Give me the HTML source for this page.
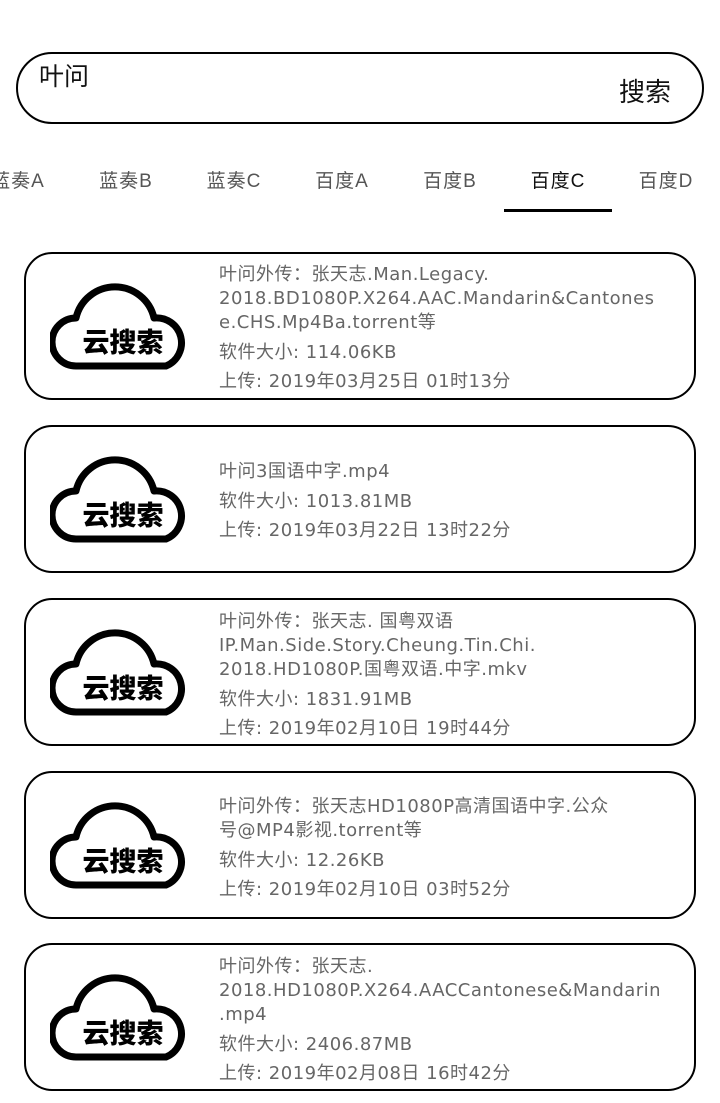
<!DOCTYPE html>
<html><head><meta charset="utf-8"><style>
*{margin:0;padding:0;box-sizing:border-box}
body{width:720px;height:1103px;background:#fff;position:relative;overflow:hidden;font-family:"Liberation Sans","Noto Sans CJK SC",sans-serif}
.search{position:absolute;left:16px;top:52px;width:688px;height:72px;border:2px solid #000;border-radius:36px}
.q{position:absolute;left:39px;top:57px;font-size:25px;color:#111}
.btn{position:absolute;left:619px;top:72px;font-size:26px;color:#111}
.tab{position:absolute;top:166px;font-size:19px;color:#555;width:108px;text-align:center;letter-spacing:1px}
.tab.on{color:#111}
.ul{position:absolute;left:504px;top:209px;width:108px;height:3px;background:#000}
.card{position:absolute;left:24px;width:672px;height:148px;border:2px solid #000;border-radius:28px}
.card svg{position:absolute;left:24px;top:26px}
.t{position:absolute;left:193px;font-size:18px;color:#666;white-space:nowrap;letter-spacing:0.5px;font-family:"DejaVu Sans","Noto Sans CJK SC",sans-serif}
.t .ti{line-height:24px}
.t .m{line-height:29px}
.t .ti+.m{margin-top:3px}
</style></head><body>
<div class="search"></div>
<div class="q">叶问</div>
<div class="btn">搜索</div>
<div class="tab" style="left:-36px">蓝奏A</div>
<div class="tab" style="left:72px">蓝奏B</div>
<div class="tab" style="left:180px">蓝奏C</div>
<div class="tab" style="left:288px">百度A</div>
<div class="tab" style="left:396px">百度B</div>
<div class="tab on" style="left:504px">百度C</div>
<div class="tab" style="left:612px">百度D</div>
<div class="ul"></div>

<div class="card" style="top:252px">
<svg width="144" height="94" viewBox="0 0 144 94"><path d="M26,86 A24,24 0 0 1 26,38 A40,40 0 0 1 104,38 A25,25 0 0 1 116,86 Z" fill="#fff" stroke="#000" stroke-width="7" stroke-linejoin="round"/><text x="73" y="72" text-anchor="middle" font-size="27" font-weight="900" font-family="Noto Sans CJK SC,sans-serif" fill="#000">云搜索</text></svg>
<div class="t" style="top:9px"><div class="ti">叶问外传：张天志.Man.Legacy.<br>2018.BD1080P.X264.AAC.Mandarin&amp;Cantones<br>e.CHS.Mp4Ba.torrent等</div><div class="m">软件大小: 114.06KB</div><div class="m">上传: 2019年03月25日 01时13分</div></div>
</div>

<div class="card" style="top:425px">
<svg width="144" height="94" viewBox="0 0 144 94"><path d="M26,86 A24,24 0 0 1 26,38 A40,40 0 0 1 104,38 A25,25 0 0 1 116,86 Z" fill="#fff" stroke="#000" stroke-width="7" stroke-linejoin="round"/><text x="73" y="72" text-anchor="middle" font-size="27" font-weight="900" font-family="Noto Sans CJK SC,sans-serif" fill="#000">云搜索</text></svg>
<div class="t" style="top:33px"><div class="ti">叶问3国语中字.mp4</div><div class="m">软件大小: 1013.81MB</div><div class="m">上传: 2019年03月22日 13时22分</div></div>
</div>

<div class="card" style="top:598px">
<svg width="144" height="94" viewBox="0 0 144 94"><path d="M26,86 A24,24 0 0 1 26,38 A40,40 0 0 1 104,38 A25,25 0 0 1 116,86 Z" fill="#fff" stroke="#000" stroke-width="7" stroke-linejoin="round"/><text x="73" y="72" text-anchor="middle" font-size="27" font-weight="900" font-family="Noto Sans CJK SC,sans-serif" fill="#000">云搜索</text></svg>
<div class="t" style="top:10px"><div class="ti">叶问外传：张天志. 国粤双语<br>IP.Man.Side.Story.Cheung.Tin.Chi.<br>2018.HD1080P.国粤双语.中字.mkv</div><div class="m">软件大小: 1831.91MB</div><div class="m">上传: 2019年02月10日 19时44分</div></div>
</div>

<div class="card" style="top:771px">
<svg width="144" height="94" viewBox="0 0 144 94"><path d="M26,86 A24,24 0 0 1 26,38 A40,40 0 0 1 104,38 A25,25 0 0 1 116,86 Z" fill="#fff" stroke="#000" stroke-width="7" stroke-linejoin="round"/><text x="73" y="72" text-anchor="middle" font-size="27" font-weight="900" font-family="Noto Sans CJK SC,sans-serif" fill="#000">云搜索</text></svg>
<div class="t" style="top:22px"><div class="ti">叶问外传：张天志HD1080P高清国语中字.公众<br>号@MP4影视.torrent等</div><div class="m">软件大小: 12.26KB</div><div class="m">上传: 2019年02月10日 03时52分</div></div>
</div>

<div class="card" style="top:943px">
<svg width="144" height="94" viewBox="0 0 144 94"><path d="M26,86 A24,24 0 0 1 26,38 A40,40 0 0 1 104,38 A25,25 0 0 1 116,86 Z" fill="#fff" stroke="#000" stroke-width="7" stroke-linejoin="round"/><text x="73" y="72" text-anchor="middle" font-size="27" font-weight="900" font-family="Noto Sans CJK SC,sans-serif" fill="#000">云搜索</text></svg>
<div class="t" style="top:10px"><div class="ti">叶问外传：张天志.<br>2018.HD1080P.X264.AACCantonese&amp;Mandarin<br>.mp4</div><div class="m">软件大小: 2406.87MB</div><div class="m">上传: 2019年02月08日 16时42分</div></div>
</div>
</body></html>
